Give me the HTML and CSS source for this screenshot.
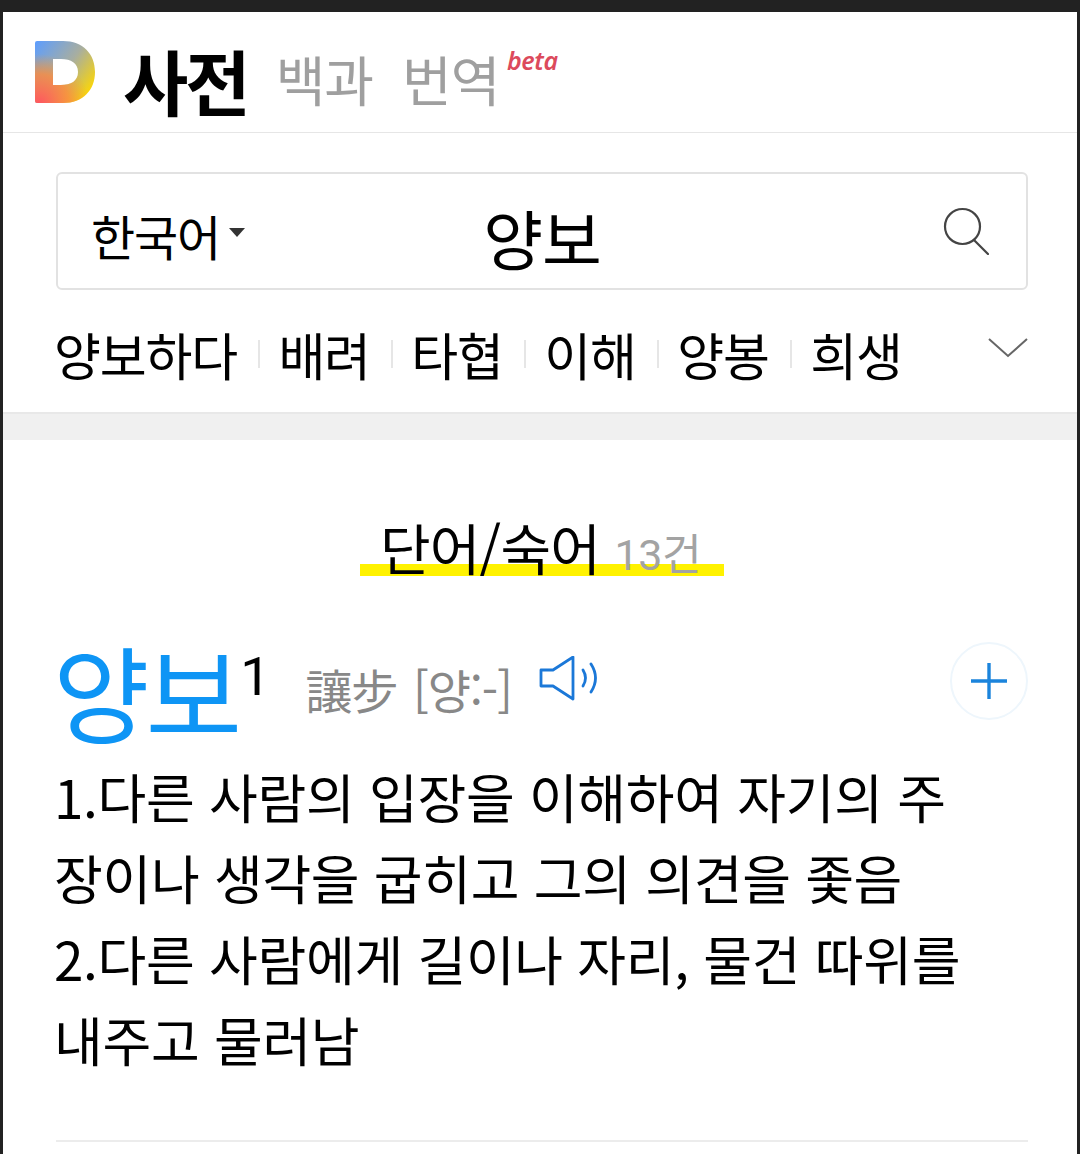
FILE: index.html
```html
<!DOCTYPE html>
<html lang="ko">
<head>
    <meta charset="UTF-8">
    <meta name="viewport" content="width=device-width, initial-scale=1.0">
    <title>다음 사전 - 양보</title>
    <link rel="stylesheet" href="styles.css">
</head>
<body>
    <div class="screen">
        <header class="header">
            <svg class="logo" width="61" height="64" viewBox="0 0 61 64">
                <defs>
                    <linearGradient id="logoBase" x1="0" y1="0" x2="1" y2="0.75">
                        <stop offset="0" stop-color="#5c9dff"/>
                        <stop offset="0.55" stop-color="#a8aea0"/>
                        <stop offset="1" stop-color="#ffd800"/>
                    </linearGradient>
                    <radialGradient id="logoRed" gradientUnits="userSpaceOnUse" cx="4" cy="64" r="50">
                        <stop offset="0" stop-color="#ff5560"/>
                        <stop offset="0.6" stop-color="#ff8a3a" stop-opacity="0.8"/>
                        <stop offset="1" stop-color="#ff9a20" stop-opacity="0"/>
                    </radialGradient>
                    <path id="logoShape" fill-rule="evenodd" d="M2 1H28C48 1 60 14 60 32S48 63 28 63H2Q0 63 0 61V3Q0 1 2 1ZM18 19V45H26C36 45 43 41 43 32S36 19 26 19Z"/>
                </defs>
                <use href="#logoShape" fill="url(#logoBase)"/>
                <use href="#logoShape" fill="url(#logoRed)"/>
            </svg>
            <strong class="brand">사전</strong>
            <a class="tab">백과</a>
            <a class="tab tab-translate">번역<em class="beta">beta</em></a>
        </header>

        <section class="search-area">
            <div class="search-box">
                <span class="lang">한국어<i class="caret"></i></span>
                <span class="query">양보</span>
                <svg class="search-icon" width="46" height="48" viewBox="0 0 46 48" fill="none" stroke="#444" stroke-width="2.2">
                    <circle cx="19.5" cy="19.5" r="17.5"/>
                    <path d="M31 33L45 47" stroke-linecap="round"/>
                </svg>
            </div>
            <div class="related">
                <a class="related-word">양보하다</a>
                <a class="related-word">배려</a>
                <a class="related-word">타협</a>
                <a class="related-word">이해</a>
                <a class="related-word">양봉</a>
                <a class="related-word">희생</a>
                <svg class="more" width="40" height="20" viewBox="0 0 40 20" fill="none" stroke="#666" stroke-width="2">
                    <path d="M1 1L20 18L39 1"/>
                </svg>
            </div>
        </section>

        <div class="band"></div>

        <main class="results">
            <h2 class="section-title"><span class="section-mark">단어/숙어 <span class="count">13건</span></span></h2>

            <article class="entry">
                <div class="entry-head">
                    <a class="word">양보</a><sup class="homonym">1</sup>
                    <span class="origin">讓步 [양:-]</span>
                    <svg class="speaker" width="60" height="46" viewBox="0 0 60 46" fill="none" stroke="#1b78d8" stroke-width="2.8">
                        <path d="M2 14H14L34 1V43L14 30H2Z" stroke-linejoin="round"/>
                        <path d="M44 14Q49 22 44 30" stroke-linecap="round"/>
                        <path d="M52 8Q61 22 52 36" stroke-linecap="round"/>
                    </svg>
                    <button class="add">
                        <svg width="36" height="36" viewBox="0 0 36 36" stroke="#1b84dc" stroke-width="3.4">
                            <path d="M0 18H36M18 0V36"/>
                        </svg>
                    </button>
                </div>
                <ol class="meanings">
                    <li>1.다른 사람의 입장을 이해하여 자기의 주장이나 생각을 굽히고 그의 의견을 좇음</li>
                    <li>2.다른 사람에게 길이나 자리, 물건 따위를 내주고 물러남</li>
                </ol>
            </article>
        </main>
    </div>
</body>
</html>
```

FILE: styles.css
```css
* {
    box-sizing: border-box;
}

html,
body {
    margin: 0;
    padding: 0;
    background: #222;
}

body {
    font-family: "Noto Sans CJK KR", "Noto Sans", sans-serif;
    color: #000;
}

.screen {
    height: 1142px;
    margin: 12px 3px 0;
    background: #fff;
    overflow: hidden;
}

.header {
    display: flex;
    align-items: flex-start;
    height: 121px;
    padding: 28px 0 0 32px;
    border-bottom: 1px solid #e6e6e6;
}

.logo {
    flex: none;
}

.brand {
    margin: -3px 0 0 27px;
    font-size: 71px;
    font-weight: 700;
    line-height: 84px;
    letter-spacing: -3px;
}

.tab {
    position: relative;
    margin: 0 0 0 28px;
    font-size: 54px;
    line-height: 78px;
    letter-spacing: -1px;
    color: #9f9f9f;
}

.tab-translate {
    margin-left: 29px;
}

.beta {
    position: absolute;
    left: 105px;
    top: 2px;
    font-family: "Noto Sans", sans-serif;
    font-size: 25px;
    font-weight: 600;
    line-height: 36px;
    letter-spacing: -0.4px;
    color: #dc4a5c;
}

.search-area {
    height: 281px;
    padding: 39px 49px 0 53px;
    border-bottom: 2px solid #e8e8e8;
}

.search-box {
    display: flex;
    align-items: center;
    position: relative;
    height: 118px;
    padding: 0 37px 0 33px;
    border: 2px solid #e2e2e2;
    border-radius: 6px;
}

.lang {
    display: flex;
    margin-top: 8px;
    font-size: 48px;
    line-height: 64px;
    letter-spacing: -1.2px;
}

.caret {
    width: 0;
    height: 0;
    margin: 25px 0 0 9px;
    border-left: 8px solid transparent;
    border-right: 8px solid transparent;
    border-top: 9px solid #333;
}

.query {
    position: absolute;
    left: 0;
    right: 0;
    top: 21px;
    text-align: center;
    font-size: 65px;
    line-height: 84px;
    font-weight: 400;
    letter-spacing: -1px;
}

.search-icon {
    margin-left: auto;
}

.related {
    display: flex;
    align-items: center;
    position: relative;
    height: 122px;
    margin-left: -2px;
    padding-top: 5px;
}

.related-word {
    font-size: 51px;
    line-height: 70px;
    letter-spacing: -1.2px;
    padding-right: 23px;
    margin-right: 18.5px;
    background: linear-gradient(#e6e6e6, #e6e6e6) right center / 2px 28px no-repeat;
}

.related-word:nth-child(6) {
    background: none;
}

.more {
    position: absolute;
    right: 0;
    top: 48px;
}

.band {
    height: 26px;
    background: #f0f0f0;
}

.results {
    padding: 0 49px 0 53px;
}

.section-title {
    margin: 70px 0 0;
    text-align: center;
    font-size: 55px;
    font-weight: 400;
    line-height: 72px;
    letter-spacing: -0.8px;
}

.section-mark {
    display: inline-block;
    padding: 0 23px 0 20px;
    background: linear-gradient(#fff200, #fff200) 0 54px / 100% 12px no-repeat;
}

.count {
    font-family: Roboto, "Noto Sans CJK KR", sans-serif;
    font-size: 43px;
    color: #a3a3a3;
    letter-spacing: -0.5px;
}

.entry {
    height: 500px;
    margin-top: 51px;
    border-bottom: 2px solid #ececec;
}

.entry-head {
    display: flex;
    align-items: flex-start;
    height: 114px;
}

.word {
    margin: -3px 0 0 -3px;
    font-size: 105px;
    font-weight: 400;
    line-height: 100px;
    letter-spacing: -4px;
    color: #0e95f5;
}

.homonym {
    font-family: Roboto, sans-serif;
    font-size: 54px;
    line-height: 70px;
    margin: 0 0 0 2px;
    vertical-align: baseline;
}

.origin {
    margin: 14px 0 0 35px;
    font-size: 47px;
    line-height: 66px;
    letter-spacing: -1.2px;
    word-spacing: 4px;
    color: #888;
}

.speaker {
    margin: 14px 0 0 27px;
}

.add {
    display: flex;
    align-items: center;
    justify-content: center;
    width: 78px;
    height: 78px;
    margin: 0 0 0 auto;
    padding: 0;
    background: #fff;
    border: 2px solid #eef6fc;
    border-radius: 50%;
}

.meanings {
    margin: 0 0 0 -2px;
    padding: 0;
    list-style: none;
    font-size: 53px;
    line-height: 81px;
    letter-spacing: -0.3px;
}

.meanings li {
    padding-right: 44px;
}
```
